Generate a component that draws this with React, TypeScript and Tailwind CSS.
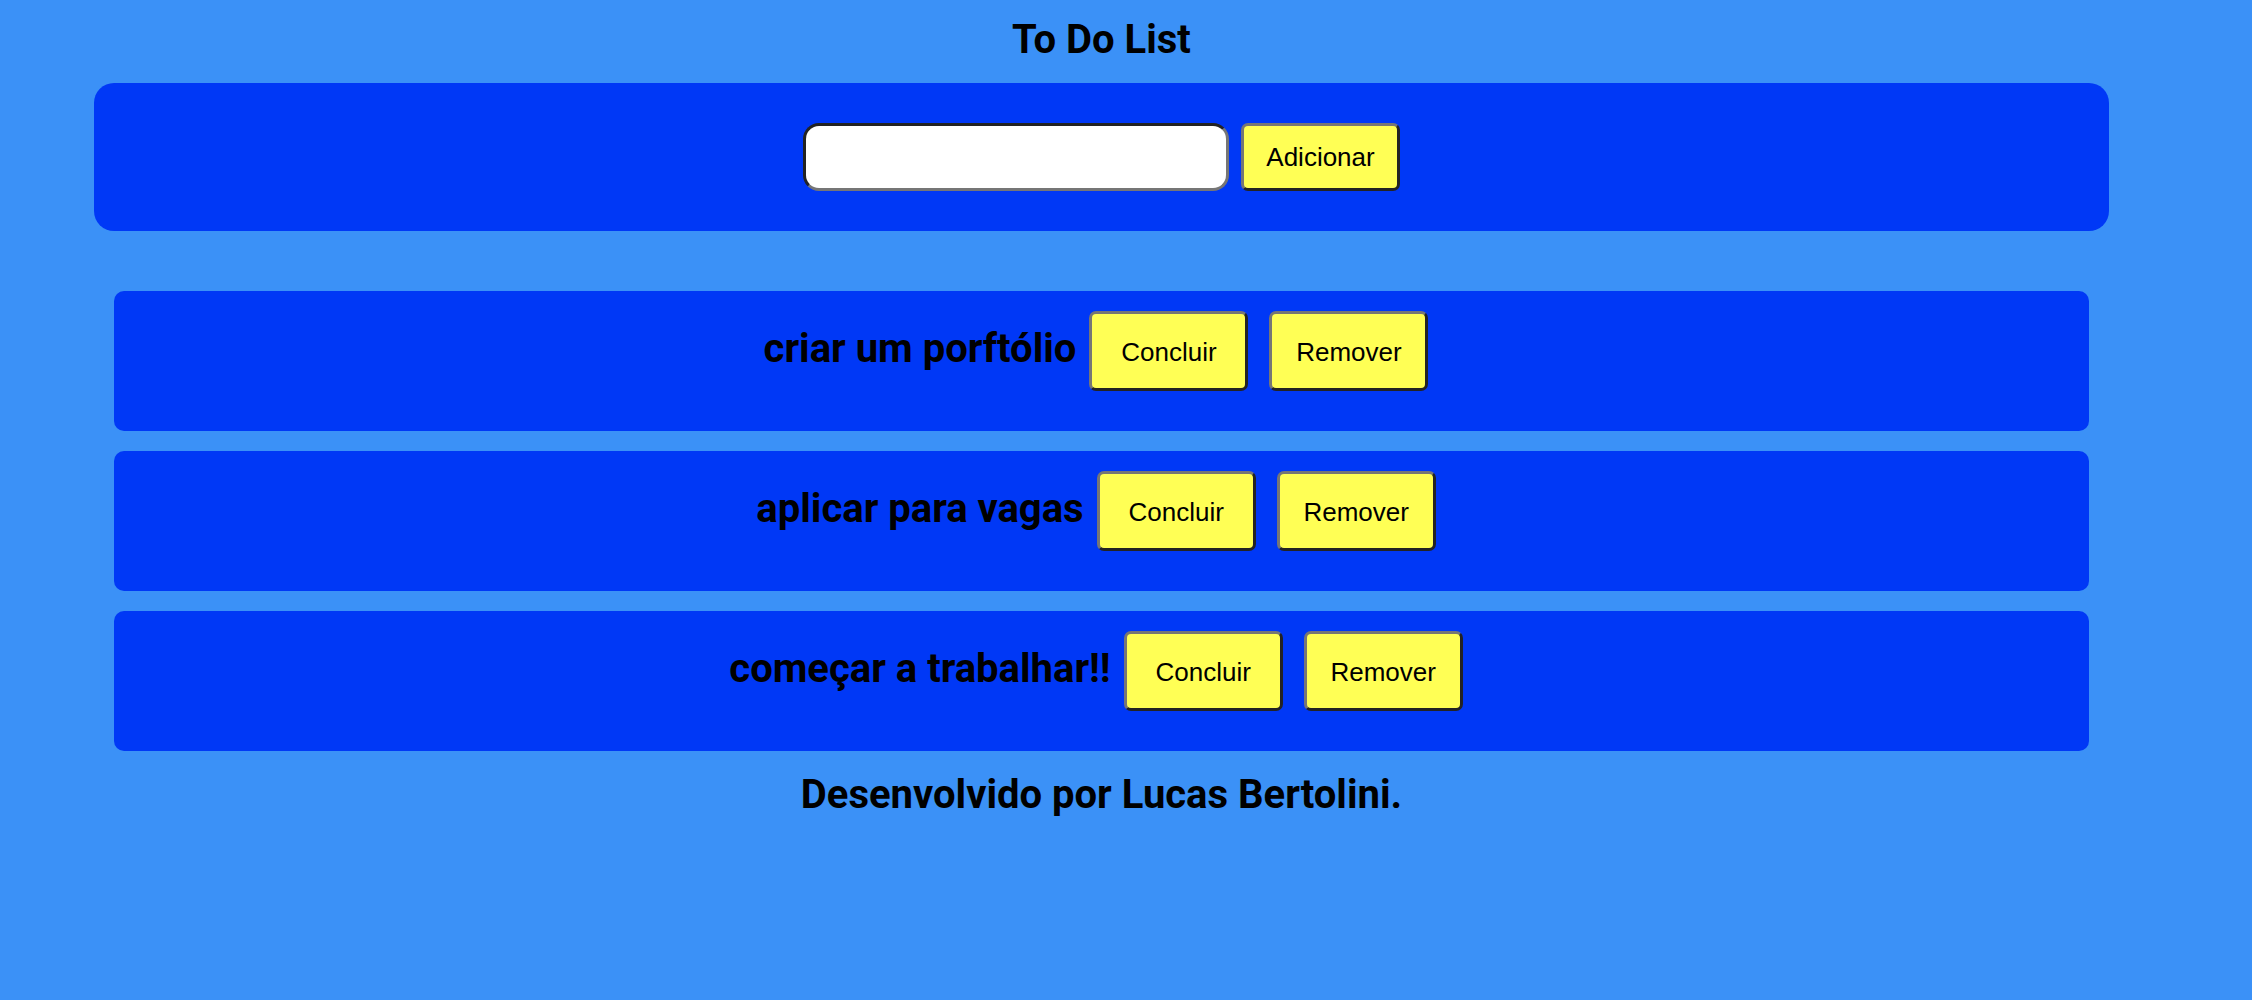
import React from "react";

const tasks = ["criar um porftólio", "aplicar para vagas", "começar a trabalhar!!"];

const btnBase =
  "w-[159px] border-[3px] border-t-[#767676] border-l-[#767676] border-b-[#232323] border-r-[#232323] rounded-[7px] bg-[#ffff55] text-black text-[26px] leading-[30px] flex items-center justify-center";

export default function App() {
  return (
    <div className="min-h-[1000px] w-full bg-[#3b91f7] pt-[16px]" style={{ fontFamily: "Roboto, 'Liberation Sans', sans-serif" }}>
      <div className="ml-[94px] w-[2015px] flex flex-col">
        <h1 className="text-center text-[40px] leading-[47px] font-bold text-black">To Do List</h1>
        <div className="mt-[20px] h-[148px] rounded-[20px] bg-[#0038f6] flex items-center justify-center gap-[12px]">
          <input
            type="text"
            className="w-[426px] h-[68px] bg-white rounded-[16px] border-[3px] border-t-[#232323] border-l-[#232323] border-b-[#767676] border-r-[#767676] outline-none px-3"
          />
          <button className={btnBase + " h-[68px]"} style={{ fontFamily: "'Liberation Sans', Arial, sans-serif" }}>
            Adicionar
          </button>
        </div>
        <div className="mt-[60px] mx-[20px] flex flex-col gap-[20px]">
          {tasks.map((t) => (
            <div key={t} className="h-[140px] rounded-[10px] bg-[#0038f6] pt-[20px] flex items-start justify-center pr-[11px]">
              <span className="mt-[14px] text-[40px] leading-[47px] font-bold text-black">{t}</span>
              <button className={btnBase + " h-[80px] ml-[13px] pt-[1px]"} style={{ fontFamily: "'Liberation Sans', Arial, sans-serif" }}>
                Concluir
              </button>
              <button className={btnBase + " h-[80px] ml-[21px] pt-[1px]"} style={{ fontFamily: "'Liberation Sans', Arial, sans-serif" }}>
                Remover
              </button>
            </div>
          ))}
        </div>
        <p className="mt-[20px] text-center text-[40px] leading-[47px] font-bold text-black">Desenvolvido por Lucas Bertolini.</p>
      </div>
    </div>
  );
}
